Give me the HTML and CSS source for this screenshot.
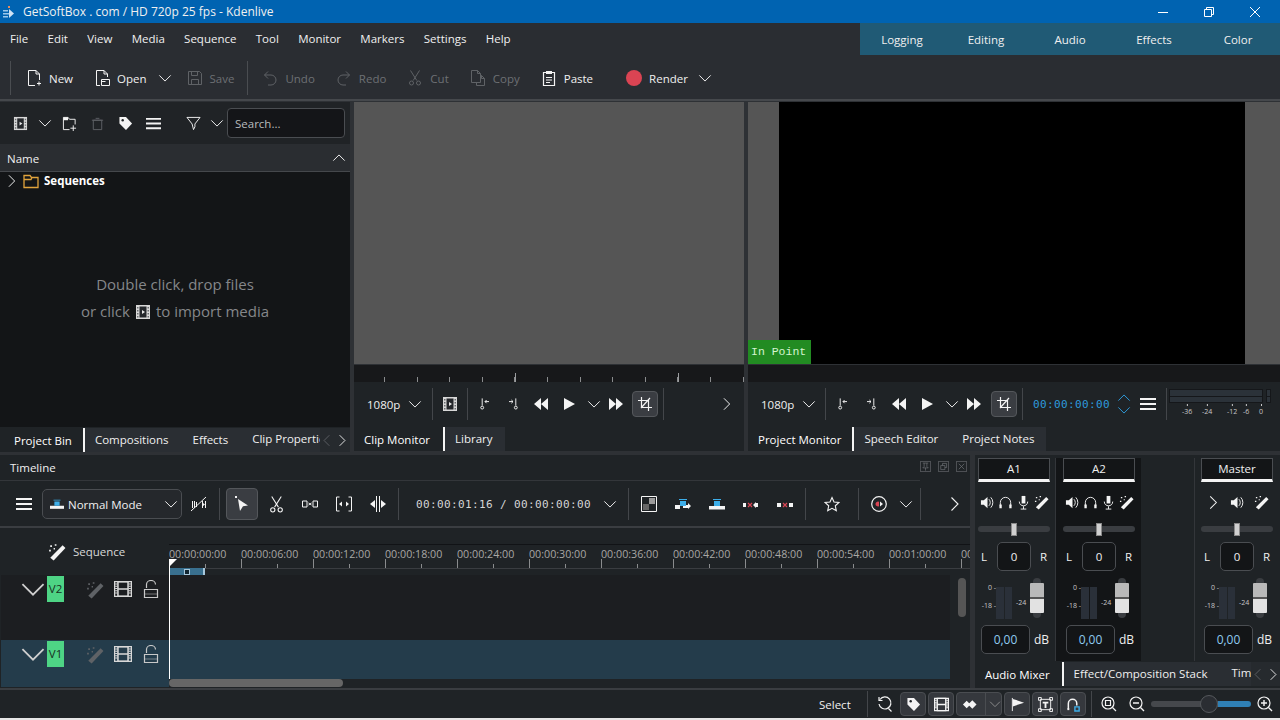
FILE: index.html
```html
<!DOCTYPE html>
<html lang="en">
<head>
    <meta charset="UTF-8">
    <title>GetSoftBox . com / HD 720p 25 fps - Kdenlive</title>
    <link rel="stylesheet" href="styles.css">
</head>
<body>
    <svg class="defs" width="0" height="0">
        <defs>
            <symbol id="i-chev" viewBox="0 0 16 16"><path d="M1.5 5L8 11.5 14.5 5" fill="none" stroke="currentColor" stroke-width="1.1"/></symbol>
            <symbol id="i-right" viewBox="0 0 16 16"><path d="M4.5 1.5L11 8l-6.5 6.5" fill="none" stroke="currentColor" stroke-width="1.1"/></symbol>
            <symbol id="i-left" viewBox="0 0 16 16"><path d="M11.5 1.5L5 8l6.5 6.5" fill="none" stroke="currentColor" stroke-width="1.1"/></symbol>
            <symbol id="i-up" viewBox="0 0 16 16"><path d="M1.5 11L8 4.5 14.5 11" fill="none" stroke="currentColor" stroke-width="1.1"/></symbol>
            <symbol id="i-new" viewBox="0 0 16 16"><path d="M9 15.5H2.5V.5H10L13.5 4v6M10 .5V4h3.5M13 11.5v4M11 13.5h4" fill="none" stroke="currentColor"/></symbol>
            <symbol id="i-open" viewBox="0 0 16 16"><path d="M6 15.5H2.5V.5H10L13.5 4v3M10 .5V4h3.5M7.5 9.5h8v6h-8zM7.5 11.5h4" fill="none" stroke="currentColor"/></symbol>
            <symbol id="i-save" viewBox="0 0 16 16"><path d="M1.5 1.5h11l2 2v11h-13zM4.5 1.5v4h6v-4M4.5 14.5v-5h7v5" fill="none" stroke="currentColor"/></symbol>
            <symbol id="i-undo" viewBox="0 0 16 16"><path d="M6 1.5L2.5 5 6 8.5M2.5 5H9a4.5 4.5 0 0 1 0 10H6" fill="none" stroke="currentColor"/></symbol>
            <symbol id="i-redo" viewBox="0 0 16 16"><path d="M10 1.5L13.5 5 10 8.5M13.5 5H7a4.5 4.5 0 0 0 0 10h3" fill="none" stroke="currentColor"/></symbol>
            <symbol id="i-cut" viewBox="0 0 16 16"><path d="M3.5 .5l6.3 10M12.5 .5L6.2 10.5" fill="none" stroke="currentColor"/><circle cx="4.5" cy="13" r="2" fill="none" stroke="currentColor"/><circle cx="11.5" cy="13" r="2" fill="none" stroke="currentColor"/></symbol>
            <symbol id="i-copy" viewBox="0 0 16 16"><path d="M1.5 12.5V.5h6l3 3v9zM7.5 .5v3h3M10.5 5.5h1l3 3v7h-8v-3M11.5 5.5v3h3" fill="none" stroke="currentColor"/></symbol>
            <symbol id="i-paste" viewBox="0 0 16 16"><path d="M2.5 2.5h11v13h-11z" fill="none" stroke="currentColor" stroke-width="1.2"/><path d="M5 1h6v3H5zM5 7h6v1H5zM5 9.5h6v1H5zM5 12h4v1H5z" fill="currentColor"/></symbol>
            <symbol id="i-clip" viewBox="0 0 16 16"><path d="M1 1h14v14H1z" fill="#d8d8d8"/><path d="M4.5 2.500h7v11h-7z" fill="#24272b"/><path d="M7 6l3 2-3 2z" fill="#e8e8e8"/><path d="M2 3h1.500v1.500H2zM2 6h1.500v1.500H2zM2 9h1.500v1.500H2zM2 12h1.500v1.500H2zM12.500 3H14v1.500h-1.500zM12.500 6H14v1.500h-1.500zM12.500 9H14v1.500h-1.500zM12.500 12H14v1.500h-1.500z" fill="#6a6d70"/></symbol>
            <symbol id="i-addfolder" viewBox="0 0 16 16"><path d="M8 14.5H1.5v-13h5l1.5 2h6V9" fill="none" stroke="currentColor"/><path d="M1.5 1.5h5v3h-5z" fill="currentColor"/><path d="M12 10v6M9 13h6" stroke="currentColor" fill="none"/></symbol>
            <symbol id="i-trash" viewBox="0 0 16 16"><path d="M3.5 4.5h9v10h-9zM2 4.5h12M6 2.5h4" fill="none" stroke="currentColor"/></symbol>
            <symbol id="i-tag" viewBox="0 0 16 16"><path d="M1.5 1h7l6.500 7-6.500 7L1.500 8z" fill="currentColor"/><circle cx="5" cy="4.5" r="1.3" fill="#1f2326"/></symbol>
            <symbol id="i-menu" viewBox="0 0 16 16"><path d="M0 2h16v2H0zM0 7h16v2H0zM0 12h16v2H0z" fill="currentColor"/></symbol>
            <symbol id="i-filter" viewBox="0 0 16 16"><path d="M1 1.5h14L9.5 8.5v3L8 14.5 6.5 8.500z" fill="none" stroke="currentColor"/></symbol>
            <symbol id="i-in" viewBox="-2 -2 20 20"><path d="M4.5 1v9" stroke="currentColor" fill="none" stroke-width="1.2"/><circle cx="4.5" cy="12.5" r="1.8" fill="none" stroke="currentColor" stroke-width="1.2"/><path d="M13 5H8M10 3L8 5l2 2" fill="none" stroke="currentColor" stroke-width="1.2"/></symbol>
            <symbol id="i-out" viewBox="-2 -2 20 20"><path d="M11.5 1v9" stroke="currentColor" fill="none" stroke-width="1.2"/><circle cx="11.5" cy="12.5" r="1.8" fill="none" stroke="currentColor" stroke-width="1.2"/><path d="M3 5h5M6 3l2 2-2 2" fill="none" stroke="currentColor" stroke-width="1.2"/></symbol>
            <symbol id="i-rew" viewBox="0 0 16 16"><path d="M8 2v12L1 8zM15 2v12L8 8z" fill="currentColor"/></symbol>
            <symbol id="i-play" viewBox="0 0 16 16"><path d="M3 2v12l11-6z" fill="currentColor"/></symbol>
            <symbol id="i-fwd" viewBox="0 0 16 16"><path d="M1 2v12l7-6zM8 2v12l7-6z" fill="currentColor"/></symbol>
            <symbol id="i-crop" viewBox="0 0 16 16"><path d="M4.5 1v10.5H15M1 4.5h10.5V15M4 12L13 2" fill="none" stroke="currentColor" stroke-width="1.2"/></symbol>
            <symbol id="i-nospacer" viewBox="0 0 16 16"><path d="M0 15L15 1" fill="none" stroke="currentColor"/><path d="M1 5h1v7H1zM3 5h1v7H3zM5 6h1v5H5zM11 5h1v7h-1zM14 5h1v7h-1zM12 7l2 1.5-2 1.5z" fill="currentColor"/></symbol>
            <symbol id="i-pointer" viewBox="0 0 16 16"><path d="M4 3l10 6.5-5 .8L6 15z" fill="currentColor"/><path d="M1 0h2v2H1z" fill="currentColor"/></symbol>
            <symbol id="i-spacer" viewBox="0 0 16 16"><path d="M.5 5H5v6H.5zM11 5h4.5v6H11z" fill="none" stroke="currentColor"/><path d="M6.5 7l3 2M9.5 7l-3 2" stroke="currentColor" fill="none"/></symbol>
            <symbol id="i-ripple" viewBox="0 0 16 16"><path d="M3.5 1H.5v14h3M12.5 1h3v14h-3" fill="none" stroke="currentColor"/><path d="M3 8l3-2.5v5zM13 8l-3-2.5v5z" fill="currentColor"/></symbol>
            <symbol id="i-roll" viewBox="0 0 16 16"><path d="M6.5 0v16M9.5 0v16" fill="none" stroke="currentColor"/><path d="M0 8l5-4v8zM16 8l-5-4v8z" fill="currentColor"/></symbol>
            <symbol id="i-checker" viewBox="0 0 16 16"><path d="M.5 .5h15v15H.5z" fill="none" stroke="currentColor"/><path d="M8 2h6v6H8z" fill="#9a9a9a"/><path d="M2 8h6v6H2z" fill="#666"/></symbol>
            <symbol id="i-insert" viewBox="0 0 16 16"><path d="M0 9h5v4H0zM8 9h5V7l3 3-3 3v-1H8z" fill="currentColor"/><path d="M5 5h6v5H5zM4 3h8v1H4z" fill="#3daee9"/></symbol>
            <symbol id="i-overwrite" viewBox="0 0 16 16"><path d="M0 10h16v3.5H0z" fill="currentColor"/><path d="M5 5h6v5H5zM4 3h8v1H4z" fill="#3daee9"/></symbol>
            <symbol id="i-extract" viewBox="0 0 16 16"><path d="M0 7h3v4H0zM10 9l3-3v1h2v4h-2v1z" fill="currentColor"/><path d="M5 7l4 4M9 7l-4 4" stroke="#da4453" fill="none" stroke-width="1.2"/></symbol>
            <symbol id="i-lift" viewBox="0 0 16 16"><path d="M0 7h4v4H0zM12 7h4v4h-4z" fill="currentColor"/><path d="M6 7l4 4M10 7l-4 4" stroke="#da4453" fill="none" stroke-width="1.2"/></symbol>
            <symbol id="i-star" viewBox="0 0 16 16"><path d="M8 1.5l2 4.5 5 .5-3.700 3.300 1 4.900L8 12.300 3.700 14.700l1-4.900L1 6.500 6 6z" fill="none" stroke="currentColor" stroke-width="1.1"/></symbol>
            <symbol id="i-rec" viewBox="0 0 16 16"><circle cx="8" cy="8" r="7.3" fill="none" stroke="currentColor" stroke-width="1.2"/><path d="M4.5 8A2.5 2.5 0 0 1 8 5.7v4.6A2.500 2.500 0 0 1 4.500 8z" fill="#da4453"/><path d="M9 5.5L12 8l-3 2.5z" fill="currentColor"/></symbol>
            <symbol id="i-wand" viewBox="0 0 16 16"><path d="M13 2l2.500 2.500L5 15.500 2 13z" fill="currentColor"/><path d="M2 2h1.500v1.500H2zM6 1h1.500v1.500H6zM1 6h1.500v1.500H1zM5 4.500h1.200v1.200H5z" fill="currentColor"/></symbol>
            <symbol id="i-film" viewBox="0 0 16 16"><path d="M.5 1.5h15v13H.5z" fill="none" stroke="currentColor" stroke-width="1.2"/><path d="M3.5 1.5h9v13h-9zM3.5 8h9" fill="none" stroke="currentColor" stroke-width="1.4"/><path d="M1 3h2v1H1zM1 5h2v1H1zM1 7h2v1H1zM1 9h2v1H1zM1 11h2v1H1zM13 3h2v1h-2zM13 5h2v1h-2zM13 7h2v1h-2zM13 9h2v1h-2zM13 11h2v1h-2z" fill="currentColor"/></symbol>
            <symbol id="i-lock" viewBox="0 0 16 18"><path d="M1.5 9.500h13v8h-13z" fill="none" stroke="currentColor" stroke-width="1.2"/><path d="M3.5 8V4.500a4.500 4 0 0 1 9 0" fill="none" stroke="currentColor" stroke-width="1.2"/><path d="M2 14h12" stroke="currentColor" opacity=".5"/></symbol>
            <symbol id="i-speaker" viewBox="0 0 16 16"><path d="M1 5.5h3L8 2v12l-4-3.500H1z" fill="currentColor"/><path d="M9.5 4.500a5 5 0 0 1 0 7M11.500 2.500a8 8 0 0 1 0 11" fill="none" stroke="currentColor"/></symbol>
            <symbol id="i-head" viewBox="0 0 16 16"><path d="M2.500 12V8a5.500 5.500 0 0 1 11 0v4" fill="none" stroke="currentColor"/><path d="M1.500 10H4v4H1.500zM12 10h2.500v4H12z" fill="currentColor"/></symbol>
            <symbol id="i-mic" viewBox="0 0 16 16"><path d="M6 1h4v8H6z" fill="currentColor"/><path d="M3.500 7c0 6 9 6 9 0M8 12v3M5 15h6" fill="none" stroke="currentColor"/></symbol>
            <symbol id="i-pin" viewBox="0 0 16 16"><path d="M.5 .5h15v15H.5z" fill="none" stroke="currentColor"/><path d="M4 3h8M6 3v5L4 10h8l-2-2V3M8 10v4" fill="none" stroke="currentColor"/></symbol>
            <symbol id="i-float" viewBox="0 0 16 16"><path d="M.5 .5h15v15H.5zM4 6.500h6v6H4zM6.500 6.500v-3h6v6H10" fill="none" stroke="currentColor"/></symbol>
            <symbol id="i-close" viewBox="0 0 16 16"><path d="M.5 .5h15v15H.5zM4 4l8 8M12 4l-8 8" fill="none" stroke="currentColor"/></symbol>
            <symbol id="i-loop" viewBox="0 0 16 16"><path d="M3 3.500A6 6 0 1 1 2 8M11.500 12.500l3 3M2 1v3.500h3.500" fill="none" stroke="currentColor" stroke-width="1.2"/></symbol>
            <symbol id="i-keys" viewBox="0 0 16 16"><path d="M5 4l4 4-4 4-4-4zM11 3.500L15.500 8 11 12.500 6.500 8z" fill="currentColor"/></symbol>
            <symbol id="i-flag" viewBox="0 0 16 16"><path d="M2.500 1v14" stroke="currentColor" fill="none"/><path d="M3 2l12 4-12 4z" fill="currentColor"/></symbol>
            <symbol id="i-text" viewBox="0 0 16 16"><path d="M2.500 2.500h11v11h-11z" fill="none" stroke="currentColor"/><path d="M.5 .5h3v3h-3zM12.500 .5h3v3h-3zM.5 12.500h3v3h-3zM12.500 12.500h3v3h-3z" fill="none" stroke="currentColor"/><path d="M5 5h6v1.800H9v5H7v-5H5z" fill="currentColor"/></symbol>
            <symbol id="i-magnet" viewBox="0 0 16 16"><path d="M2.500 13V7a4.500 4.500 0 0 1 9 0v2" fill="none" stroke="currentColor" stroke-width="1.6"/><path d="M1.500 12h2v2h-2z" fill="currentColor"/><path d="M9.500 10.500h4.500v4.500H9.500z" fill="none" stroke="#3daee9" stroke-width="1.5"/></symbol>
            <symbol id="i-zfit" viewBox="0 0 16 16"><circle cx="7" cy="7" r="6" fill="none" stroke="currentColor" stroke-width="1.2"/><path d="M4.500 4.500h5v5h-5zM11.500 11.500l3.500 3.500" fill="none" stroke="currentColor" stroke-width="1.2"/></symbol>
            <symbol id="i-zout" viewBox="0 0 16 16"><circle cx="7" cy="7" r="6" fill="none" stroke="currentColor" stroke-width="1.2"/><path d="M4 7h6M11.500 11.500l3.500 3.500" fill="none" stroke="currentColor" stroke-width="1.4"/></symbol>
            <symbol id="i-zin" viewBox="0 0 16 16"><circle cx="7" cy="7" r="6" fill="none" stroke="currentColor" stroke-width="1.2"/><path d="M4 7h6M7 4v6M11.500 11.500l3.500 3.500" fill="none" stroke="currentColor" stroke-width="1.4"/></symbol>
            <symbol id="i-kde" viewBox="0 0 12 14"><path d="M0 5h5v1.500H0zM0 8h6v1.500H0zM0 11h5v1.500H0z" fill="#9cc7ea"/><path d="M6 4l5 4.500L6 13z" fill="#cfe3f5"/><path d="M5 1h2v2H5z" fill="#e68a5c"/></symbol>
        </defs>
    </svg>

    <header class="titlebar">
        <svg class="ico"><use href="#i-kde"/></svg>
        <span class="title-text">GetSoftBox . com / HD 720p 25 fps - Kdenlive</span>
        <div class="win-btns">
            <svg viewBox="0 0 12 12"><path d="M1 6.500h10" stroke="#fff" fill="none"/></svg>
            <svg viewBox="0 0 12 12"><path d="M1.500 3.500h7v7h-7zM3.500 3.500v-2h7v7h-2" stroke="#fff" fill="none"/></svg>
            <svg viewBox="0 0 12 12"><path d="M1 1l10 10M11 1L1 11" stroke="#fff" fill="none"/></svg>
        </div>
    </header>

    <div class="menubar">
        <nav class="menu">
            <span>File</span><span>Edit</span><span>View</span><span>Media</span><span>Sequence</span><span>Tool</span><span>Monitor</span><span>Markers</span><span>Settings</span><span>Help</span>
        </nav>
        <div class="activities">
            <span>Logging</span><span>Editing</span><span>Audio</span><span>Effects</span><span>Color</span>
        </div>
    </div>

    <div class="toolbar">
        <span class="sep sep-first"></span>
        <span class="tool"><svg class="ico"><use href="#i-new"/></svg>New</span>
        <span class="tool"><svg class="ico"><use href="#i-open"/></svg>Open</span>
        <svg class="ico small chev-open"><use href="#i-chev"/></svg>
        <span class="tool off"><svg class="ico"><use href="#i-save"/></svg>Save</span>
        <span class="sep sep-edit"></span>
        <span class="tool off"><svg class="ico"><use href="#i-undo"/></svg>Undo</span>
        <span class="tool off"><svg class="ico"><use href="#i-redo"/></svg>Redo</span>
        <span class="tool off"><svg class="ico"><use href="#i-cut"/></svg>Cut</span>
        <span class="tool off"><svg class="ico"><use href="#i-copy"/></svg>Copy</span>
        <span class="tool"><svg class="ico"><use href="#i-paste"/></svg>Paste</span>
        <span class="tool render"><span class="rec-dot"></span>Render</span>
        <svg class="ico small"><use href="#i-chev"/></svg>
    </div>

    <main class="upper">
        <section class="bin">
            <div class="bin-tools">
                <svg class="ico"><use href="#i-clip"/></svg>
                <svg class="ico small"><use href="#i-chev"/></svg>
                <svg class="ico"><use href="#i-addfolder"/></svg>
                <svg class="ico off"><use href="#i-trash"/></svg>
                <svg class="ico"><use href="#i-tag"/></svg>
                <svg class="ico"><use href="#i-menu"/></svg>
                <svg class="ico filter"><use href="#i-filter"/></svg>
                <svg class="ico small"><use href="#i-chev"/></svg>
                <div class="search">Search...</div>
            </div>
            <div class="bin-head"><span>Name</span><svg class="ico small"><use href="#i-up"/></svg></div>
            <div class="bin-body">
                <div class="tree-row">
                    <svg class="ico small"><use href="#i-right"/></svg>
                    <svg class="folder" viewBox="0 0 16 16"><path d="M1 2.500h6l1.500 2H15v10H1zM1 6.500h7l1-2" fill="none" stroke="#e0a33c" stroke-width="1.3"/></svg>
                    <b>Sequences</b>
                </div>
                <div class="bin-hint">
                    <div>Double click, drop files</div>
                    <div class="hint-line">or click <svg class="ico"><use href="#i-clip"/></svg> to import media</div>
                </div>
            </div>
            <div class="tabs">
                <span class="tab active">Project Bin</span><span class="tab">Compositions</span><span class="tab">Effects</span><span class="tab tab-cut">Clip Properties</span>
                <span class="tab-arrows"><svg class="ico small off"><use href="#i-left"/></svg><svg class="ico small"><use href="#i-right"/></svg></span>
            </div>
        </section>

        <section class="monitor clip-mon">
            <div class="screen gray"></div>
            <div class="mon-ruler ticked"></div>
            <div class="mon-ctrl">
                <span class="res">1080p</span>
                <svg class="ico small"><use href="#i-chev"/></svg>
                <span class="vsep"></span>
                <span class="ib"><svg class="ico"><use href="#i-clip"/></svg></span>
                <span class="vsep"></span>
                <span class="ib"><svg class="ico"><use href="#i-in"/></svg></span>
                <span class="ib"><svg class="ico"><use href="#i-out"/></svg></span>
                <span class="ib"><svg class="ico"><use href="#i-rew"/></svg></span>
                <span class="ib"><svg class="ico"><use href="#i-play"/></svg></span>
                <span class="ib thin"><svg class="ico small"><use href="#i-chev"/></svg></span>
                <span class="ib thin"><svg class="ico"><use href="#i-fwd"/></svg></span>
                <span class="ib on"><svg class="ico"><use href="#i-crop"/></svg></span>
                <span class="vsep"></span>
                <svg class="ico small mon-more"><use href="#i-right"/></svg>
            </div>
            <div class="tabs">
                <span class="tab active">Clip Monitor</span><span class="tab">Library</span>
            </div>
        </section>

        <section class="monitor proj-mon">
            <div class="screen gray">
                <div class="video"></div>
                <div class="in-point">In Point</div>
            </div>
            <div class="mon-ruler"></div>
            <div class="mon-ctrl">
                <span class="res">1080p</span>
                <svg class="ico small"><use href="#i-chev"/></svg>
                <span class="vsep"></span>
                <span class="ib"><svg class="ico"><use href="#i-in"/></svg></span>
                <span class="ib"><svg class="ico"><use href="#i-out"/></svg></span>
                <span class="ib"><svg class="ico"><use href="#i-rew"/></svg></span>
                <span class="ib"><svg class="ico"><use href="#i-play"/></svg></span>
                <span class="ib thin"><svg class="ico small"><use href="#i-chev"/></svg></span>
                <span class="ib thin"><svg class="ico"><use href="#i-fwd"/></svg></span>
                <span class="ib on"><svg class="ico"><use href="#i-crop"/></svg></span>
                <span class="vsep"></span>
                <span class="timecode blue">00:00:00:00</span>
                <span class="spin"><svg class="ico small"><use href="#i-up"/></svg><svg class="ico small"><use href="#i-chev"/></svg></span>
                <svg class="ico mon-menu"><use href="#i-menu"/></svg>
                <span class="vsep"></span>
                <div class="vu">
                    <div class="vu-bars">
                        <div class="vu-main"><i></i><i></i></div>
                        <div class="vu-clip"><i></i><i></i></div>
                    </div>
                    <div class="vu-scale"><span class="s36">-36</span><span class="s24">-24</span><span class="s12">-12</span><span class="s6">-6</span><span class="s0">0</span></div>
                </div>
            </div>
            <div class="tabs">
                <span class="tab active">Project Monitor</span><span class="tab">Speech Editor</span><span class="tab">Project Notes</span>
            </div>
        </section>
    </main>

    <div class="lower">
        <section class="timeline">
            <div class="tl-title">
                <span>Timeline</span>
                <div class="dock-btns">
                    <svg class="ico"><use href="#i-pin"/></svg><svg class="ico"><use href="#i-float"/></svg><svg class="ico"><use href="#i-close"/></svg>
                </div>
            </div>
            <div class="tl-tools">
                <span class="ib slot"><svg class="ico"><use href="#i-menu"/></svg></span>
                <div class="mode">
                    <svg class="ico"><use href="#i-overwrite"/></svg>
                    <span>Normal Mode</span>
                    <svg class="ico small"><use href="#i-chev"/></svg>
                </div>
                <span class="ib slot"><svg class="ico"><use href="#i-nospacer"/></svg></span>
                <span class="vsep"></span>
                <span class="ib on pointer"><svg class="ico"><use href="#i-pointer"/></svg></span>
                <span class="ib slot"><svg class="ico cut-ico"><use href="#i-cut"/></svg></span>
                <span class="ib slot"><svg class="ico"><use href="#i-spacer"/></svg></span>
                <span class="ib slot"><svg class="ico"><use href="#i-ripple"/></svg></span>
                <span class="ib slot"><svg class="ico"><use href="#i-roll"/></svg></span>
                <span class="vsep"></span>
                <span class="timecode tl-code">00:00:01:16 / 00:00:00:00</span>
                <svg class="ico small chev-code"><use href="#i-chev"/></svg>
                <span class="vsep"></span>
                <span class="ib slot"><svg class="ico"><use href="#i-checker"/></svg></span>
                <span class="ib slot"><svg class="ico"><use href="#i-insert"/></svg></span>
                <span class="ib slot"><svg class="ico"><use href="#i-overwrite"/></svg></span>
                <span class="ib slot"><svg class="ico"><use href="#i-extract"/></svg></span>
                <span class="ib slot"><svg class="ico"><use href="#i-lift"/></svg></span>
                <span class="vsep"></span>
                <span class="ib slot wide"><svg class="ico"><use href="#i-star"/></svg></span>
                <span class="vsep"></span>
                <span class="ib slot"><svg class="ico"><use href="#i-rec"/></svg></span>
                <svg class="ico small chev-rec"><use href="#i-chev"/></svg>
                <span class="vsep"></span>
                <svg class="ico tl-more"><use href="#i-right"/></svg>
            </div>
            <div class="tl-rulerrow">
                <div class="seq-cell"><svg class="ico"><use href="#i-wand"/></svg><span>Sequence</span></div>
                <div class="ruler">
                    <div class="labels">
                        <span>00:00:00:00</span><span>00:00:06:00</span><span>00:00:12:00</span><span>00:00:18:00</span><span>00:00:24:00</span><span>00:00:30:00</span><span>00:00:36:00</span><span>00:00:42:00</span><span>00:00:48:00</span><span>00:00:54:00</span><span>00:01:00:00</span><span>00:01:06:00</span>
                    </div>
                    <div class="zone"><i></i></div>
                </div>
            </div>
            <div class="tracks">
                <div class="track v2">
                    <div class="track-head">
                        <svg class="ico tr-chev"><use href="#i-chev"/></svg>
                        <span class="tr-name">V2</span>
                        <svg class="ico off tr-wand"><use href="#i-wand"/></svg>
                        <svg class="ico tr-film"><use href="#i-film"/></svg>
                        <svg class="ico tr-lock"><use href="#i-lock"/></svg>
                    </div>
                    <div class="track-body"></div>
                </div>
                <div class="track v1">
                    <div class="track-head">
                        <svg class="ico tr-chev"><use href="#i-chev"/></svg>
                        <span class="tr-name">V1</span>
                        <svg class="ico off tr-wand"><use href="#i-wand"/></svg>
                        <svg class="ico tr-film"><use href="#i-film"/></svg>
                        <svg class="ico tr-lock"><use href="#i-lock"/></svg>
                    </div>
                    <div class="track-col">
                        <div class="track-body"></div>
                        <div class="hscroll"><i></i></div>
                    </div>
                </div>
                <div class="vscroll"></div>
                <div class="playhead"></div>
            </div>
        </section>

        <section class="mixer">
            <div class="channels">
                <div class="channel">
                    <div class="ch-name">A1</div>
                    <div class="ch-icons"><svg class="ico"><use href="#i-speaker"/></svg><svg class="ico"><use href="#i-head"/></svg><svg class="ico"><use href="#i-mic"/></svg><svg class="ico"><use href="#i-wand"/></svg></div>
                    <div class="balance"><i></i></div>
                    <div class="pan"><span>L</span><b>0</b><span>R</span></div>
                    <div class="levels">
                        <div class="db-labels"><span>0 -</span><span>-18 -</span></div>
                        <div class="bars"><i></i><i></i></div>
                        <span class="db24">-24</span>
                        <div class="fader"><i></i></div>
                    </div>
                    <div class="gain"><b>0,00</b><span>dB</span></div>
                </div>
                <div class="channel dark">
                    <div class="ch-name">A2</div>
                    <div class="ch-icons"><svg class="ico"><use href="#i-speaker"/></svg><svg class="ico"><use href="#i-head"/></svg><svg class="ico"><use href="#i-mic"/></svg><svg class="ico"><use href="#i-wand"/></svg></div>
                    <div class="balance"><i></i></div>
                    <div class="pan"><span>L</span><b>0</b><span>R</span></div>
                    <div class="levels">
                        <div class="db-labels"><span>0 -</span><span>-18 -</span></div>
                        <div class="bars"><i></i><i></i></div>
                        <span class="db24">-24</span>
                        <div class="fader"><i></i></div>
                    </div>
                    <div class="gain"><b>0,00</b><span>dB</span></div>
                </div>
                <div class="channel master">
                    <div class="ch-name">Master</div>
                    <div class="ch-icons"><svg class="ico"><use href="#i-right"/></svg><svg class="ico"><use href="#i-speaker"/></svg><svg class="ico"><use href="#i-wand"/></svg></div>
                    <div class="balance"><i></i></div>
                    <div class="pan"><span>L</span><b>0</b><span>R</span></div>
                    <div class="levels">
                        <div class="db-labels"><span>0 -</span><span>-18 -</span></div>
                        <div class="bars"><i></i><i></i></div>
                        <span class="db24">-24</span>
                        <div class="fader"><i></i></div>
                    </div>
                    <div class="gain"><b>0,00</b><span>dB</span></div>
                </div>
            </div>
            <div class="tabs">
                <span class="tab active">Audio Mixer</span><span class="tab">Effect/Composition Stack</span><span class="tab tab-cut2">Time Remapping</span>
                <span class="tab-arrows"><svg class="ico small off"><use href="#i-left"/></svg><svg class="ico small"><use href="#i-right"/></svg></span>
            </div>
        </section>
    </div>

    <footer class="statusbar">
        <span class="st-select">Select</span>
        <span class="vsep"></span>
        <svg class="ico st-loop"><use href="#i-loop"/></svg>
        <span class="st-btn"><svg class="ico"><use href="#i-tag"/></svg></span>
        <span class="st-btn"><svg class="ico"><use href="#i-film"/></svg></span>
        <span class="st-btn st-combo"><svg class="ico"><use href="#i-keys"/></svg><i></i><svg class="ico small"><use href="#i-chev"/></svg></span>
        <span class="st-btn"><svg class="ico"><use href="#i-flag"/></svg></span>
        <span class="st-btn"><svg class="ico"><use href="#i-text"/></svg></span>
        <span class="st-btn"><svg class="ico"><use href="#i-magnet"/></svg></span>
        <span class="vsep st-sep2"></span>
        <svg class="ico st-zf"><use href="#i-zfit"/></svg>
        <svg class="ico st-zo"><use href="#i-zout"/></svg>
        <div class="zoom-slider"><i></i></div>
        <svg class="ico st-zi"><use href="#i-zin"/></svg>
    </footer>
    <div class="bottom-edge"></div>
</body>
</html>
```

FILE: styles.css
```css
* {
    box-sizing: border-box;
}
body {
    margin: 0;
    width: 1280px;
    height: 720px;
    overflow: hidden;
    background: #2e3135;
    color: #f0f0f0;
    font-family: "Open Sans", "Noto Sans", sans-serif;
    font-size: 11.5px;
}
.defs {
    position: absolute;
}
.ico {
    width: 16px;
    height: 16px;
    flex: none;
    display: block;
    color: #f4f4f4;
}
.ico.small {
    width: 14px;
    height: 14px;
}
.ico.off {
    color: #5f6266;
}

/* title bar */
.titlebar {
    height: 23px;
    background: #0063b1;
    display: flex;
    align-items: center;
    padding-left: 3px;
    font-size: 12px;
}
.titlebar .ico {
    width: 12px;
    height: 14px;
}
.title-text {
    margin-left: 8px;
}
.win-btns {
    margin-left: auto;
    display: flex;
    gap: 34px;
    padding-right: 19px;
}
.win-btns svg {
    width: 12px;
    height: 12px;
    display: block;
}

/* menu */
.menubar {
    height: 32px;
    background: #2a2d32;
    display: flex;
    justify-content: space-between;
}
.menu {
    display: flex;
    gap: 19.3px;
    padding: 0 0 2px 10px;
    align-items: center;
}
.activities {
    width: 420px;
    background: #205a75;
    display: grid;
    grid-template-columns: repeat(5, 84px);
    align-items: center;
    text-align: center;
}

/* main toolbar */
.toolbar {
    height: 46px;
    background: #2a2d32;
    border-bottom: 2px solid #45484c;
    display: flex;
    align-items: center;
    padding: 2px 0 0 10px;
}
.sep {
    width: 1px;
    height: 34px;
    background: #4a4d51;
}
.sep-first {
    margin-right: 15px;
}
.sep-edit {
    margin: 0 14px 0 -8px;
}
.tool {
    display: flex;
    align-items: center;
    gap: 7px;
    margin-right: 21px;
}
.tool.off {
    color: #6d7074;
}
.tool.off .ico {
    color: #5f6266;
}
.chev-open {
    margin: 0 15px 0 -10px;
}
.render {
    margin: 0 10px 0 12px;
}
.rec-dot {
    width: 16px;
    height: 16px;
    border-radius: 50%;
    background: #da4453;
}

/* upper panels */
.upper {
    height: 351px;
    display: flex;
    gap: 4px;
    padding-top: 1px;
}
.bin {
    width: 350px;
    display: flex;
    flex-direction: column;
}
.bin-tools {
    height: 42px;
    background: #202326;
    display: flex;
    align-items: center;
    padding-left: 13px;
}
.bin-tools .ico {
    width: 15px;
    height: 15px;
    margin-right: 13px;
}
.bin-tools .ico.small {
    width: 14px;
    height: 14px;
    margin: 0 9.5px 0 -3px;
}
.bin-tools .filter {
    margin-left: 12px;
    margin-right: 12.5px;
}
.search {
    width: 118px;
    height: 30px;
    margin-left: -6.5px;
    background: #141518;
    border: 1px solid #4a4d51;
    border-radius: 4px;
    color: #b9bbbd;
    padding: 6px 7px;
    line-height: 18px;
}
.bin-head {
    height: 28px;
    background: #2a2d31;
    border-bottom: 1px solid #45484c;
    display: flex;
    align-items: center;
    justify-content: space-between;
    padding: 1px 4px 0 7px;
}
.bin-body {
    flex: 1;
    background: #131517;
    display: flex;
    flex-direction: column;
}
.tree-row {
    display: flex;
    align-items: center;
    height: 17px;
    padding-left: 5px;
}
.tree-row b {
    margin-left: 5px;
    color: #fff;
}
.folder {
    width: 16px;
    height: 16px;
    margin-left: 4px;
}
.bin-hint {
    margin-top: 82px;
    text-align: center;
    color: #85878a;
    font-size: 15px;
    line-height: 27px;
}
.hint-line {
    display: flex;
    justify-content: center;
    align-items: center;
    gap: 5px;
}

/* tabs */
.tabs {
    height: 25px;
    flex: none;
    display: flex;
    align-items: stretch;
    padding-top: 1px;
    background: #1f2326;
    overflow: hidden;
}
.tab {
    display: flex;
    align-items: center;
    padding: 0 12px 2px;
    background: #2a2e33;
    white-space: nowrap;
}
.tab.active {
    background: #1f2326;
    border-right: 2px solid #f4f4f4;
    padding: 0 11px 0 10px;
    color: #fff;
}
.tab.active + .tab {
    padding-left: 10px;
}
.bin .tabs {
    padding-left: 4px;
}
.clip-mon .tab.active {
    padding-right: 13px;
}
.mixer .tab.active {
    padding-right: 12px;
}
.tab-cut, .tab-cut2 {
    overflow: hidden;
    padding-right: 0;
    display: block;
    line-height: 21px;
}
.tab-cut {
    width: 80px;
}
.tab-cut2 {
    width: 38px;
}
.tab-arrows {
    display: flex;
    align-items: center;
    gap: 3px;
    background: #262a2e;
    flex: 1;
}
.tab-arrows .ico.small {
    width: 13px;
    height: 13px;
}

/* monitors */
.monitor {
    display: flex;
    flex-direction: column;
}
.clip-mon {
    width: 390px;
}
.proj-mon {
    width: 532px;
}
.screen {
    height: 262px;
    display: flex;
    position: relative;
    justify-content: center;
}
.gray {
    background: #555;
}
.video {
    width: 466px;
    margin-left: -4px;
    background: #000;
}
.in-point {
    position: absolute;
    left: 0;
    bottom: 0;
    width: 63px;
    height: 24px;
    background: #228b22;
    color: #d4f4d0;
    font: 11.5px/24px "Liberation Mono", monospace;
    padding-left: 3px;
}
.mon-ruler {
    height: 17px;
    background-color: #17181a;
    margin-top: 1px;
}
.ticked {
    background-image:
        repeating-linear-gradient(to right, #9a9c9e 0 1px, transparent 1px 163px),
        repeating-linear-gradient(to right, #8a8c8e 0 1px, transparent 1px 32.6px);
    background-size: 100% 9px, 100% 5px;
    background-position: 161px bottom, 30px bottom;
    background-repeat: no-repeat;
}
.mon-ctrl {
    height: 44px;
    background: #1f2326;
    display: flex;
    align-items: center;
    padding-left: 13px;
}
.res {
    width: 41px;
}
.mon-ctrl > .ico.small {
    margin-right: 7px;
}
.proj-mon .mon-ctrl > .ico.small {
    margin-right: 6px;
}
.vsep {
    width: 1px;
    height: 32px;
    margin: 0 3px;
    background: #43464a;
    flex: none;
}
.ib {
    width: 28px;
    height: 26px;
    flex: none;
    display: flex;
    align-items: center;
    justify-content: center;
}
.ib.thin {
    width: 22px;
}
.ib.on {
    width: 26px;
    background: #3a3d42;
    border: 1px solid #54575b;
    border-radius: 4px;
    margin: 0 2px 0 5px;
}
.proj-mon .ib.on {
    margin-left: 6px;
}
.mon-ctrl > .mon-more {
    margin-left: 53px;
}
.timecode {
    font-family: "DejaVu Sans Mono", monospace;
    font-size: 11px;
    letter-spacing: .38px;
    white-space: nowrap;
}
.blue {
    color: #2e9bdc;
    margin-left: 7px;
}
.spin {
    display: flex;
    flex-direction: column;
    margin-left: 7px;
}
.spin .ico.small {
    color: #2e9bdc;
    margin: -1px 0;
}
.mon-menu {
    margin: 0 7px 0 9px;
}
.vu {
    align-self: flex-start;
    margin: 7px 0 0 -1px;
    width: 102px;
}
.vu-bars {
    display: flex;
    gap: 3px;
}
.vu-main, .vu-clip {
    background: #15171a;
    padding: 1px;
    display: flex;
    flex-direction: column;
    gap: 1px;
    height: 14px;
}
.vu-main {
    width: 94px;
}
.vu-clip {
    width: 5px;
}
.vu-main i, .vu-clip i {
    flex: 1;
    background: #2b3239;
}
.vu-scale {
    height: 12px;
    position: relative;
    font-size: 7px;
    color: #c8c8c8;
    margin-top: 1px;
    padding-top: 3px;
}
.vu-scale span {
    position: absolute;
    top: 3px;
    transform: translateX(-50%);
}
.vu-scale span::before {
    content: "";
    position: absolute;
    left: 50%;
    top: -3px;
    width: 1px;
    height: 2px;
    background: #c8c8c8;
}
.s36 { left: 18px; }
.s24 { left: 38px; }
.s12 { left: 63px; }
.s6 { left: 77px; }
.s0 { left: 92px; }

/* lower area */
.lower {
    height: 236px;
    display: flex;
    gap: 5px;
    padding-top: 3px;
}
.timeline {
    width: 970px;
    flex: none;
    background: #1f2326;
    display: flex;
    flex-direction: column;
    position: relative;
}
.tl-title {
    height: 26px;
    display: flex;
    align-items: center;
    padding-left: 10px;
    border-bottom: 1px solid #33363a;
    margin-right: 50px;
    position: relative;
}
.dock-btns {
    position: absolute;
    right: -47px;
    top: 6px;
    display: flex;
    gap: 7px;
}
.dock-btns .ico {
    width: 11px;
    height: 11px;
    color: #6f7276;
}
.tl-tools {
    height: 47px;
    border-bottom: 2px solid #3a3d41;
    display: flex;
    align-items: center;
    padding: 1px 0 0 7px;
}
.mode {
    width: 140px;
    height: 30px;
    margin-left: 1px;
    border: 1px solid #4a4d51;
    border-radius: 5px;
    background: #25282c;
    display: flex;
    align-items: center;
    padding: 0 3px 0 7px;
    gap: 4px;
    flex: none;
}
.mode .ico:first-child {
    width: 14px;
    height: 14px;
}
.mode span {
    flex: 1;
}
.ib.slot {
    width: 34px;
}
.ib.slot.wide {
    width: 46px;
}
.ib.on.pointer {
    width: 32px;
    height: 32px;
    margin: 0 1px 0 3px;
}
.cut-ico {
    width: 17px;
    height: 17px;
}
.tl-code {
    margin-left: 14px;
    width: 175px;
    color: #d6d6d6;
}
.tl-tools > .chev-code {
    margin: 0 8px 0 12px;
}
.tl-tools > .chev-rec {
    margin: 0 4px 0 3px;
}
.tl-more {
    margin-left: 23px;
}
.tl-rulerrow {
    height: 47px;
    display: flex;
}
.seq-cell {
    width: 169px;
    flex: none;
    display: flex;
    align-items: center;
    gap: 7px;
    padding-left: 48px;
    color: #d8d8d8;
}
.seq-cell .ico {
    width: 18px;
    height: 18px;
}
.ruler {
    flex: 1;
    margin-top: 16px;
    border-top: 1px solid #111316;
    position: relative;
    overflow: hidden;
    background-image:
        repeating-linear-gradient(to right, #8a8c8e 0 1px, transparent 1px 72px),
        repeating-linear-gradient(to right, #8a8c8e 0 1px, transparent 1px 72px);
    background-size: 100% 9px, 100% 4px;
    background-position: 0 14px, 36px 19px;
    background-repeat: no-repeat;
}
.ruler::after {
    content: "";
    position: absolute;
    left: 0;
    right: 0;
    top: 23px;
    height: 1px;
    background: #3a3d41;
}
.labels {
    display: flex;
    height: 18px;
    color: #a9a7a5;
    font-size: 10.7px;
    line-height: 18px;
}
.labels span {
    width: 72px;
    flex: none;
    white-space: nowrap;
}
.zone {
    position: absolute;
    left: 1px;
    top: 23px;
    width: 35px;
    height: 7px;
    background: #39708f;
    border-right: 2px solid #a8c8dc;
    z-index: 2;
}
.zone i {
    position: absolute;
    left: 14px;
    top: 1px;
    width: 6px;
    height: 6px;
    background: #10242f;
    border: 1px solid #a8c8dc;
}
.tracks {
    flex: 1;
    position: relative;
    display: flex;
    flex-direction: column;
    padding-left: 1px;
}
.track {
    display: flex;
}
.track.v2 {
    height: 65px;
}
.track.v1 {
    height: 47px;
}
.track-head {
    width: 168px;
    flex: none;
    display: flex;
    align-items: flex-start;
    padding: 1px 0 0 19px;
    background: #1c1e21;
}
.v1 .track-head {
    background: #243c4b;
}
.track-body {
    width: 781px;
    height: 100%;
    background: #1c1e21;
}
.v1 .track-body {
    height: 39px;
    background: #243c4b;
}
.track-head .tr-chev {
    width: 26px;
    height: 26px;
    color: #cfcfcf;
}
.tr-name {
    width: 17px;
    height: 26px;
    margin-left: 1px;
    background: #4ed485;
    color: #17301f;
    text-align: center;
    line-height: 26px;
}
.track-head .tr-wand {
    margin: 5px 0 0 22px;
    width: 18px;
    height: 18px;
}
.track-head .tr-film {
    margin: 4px 0 0 10px;
    width: 18px;
    height: 18px;
    color: #d8d8d8;
}
.track-head .tr-lock {
    margin: 4px 0 0 11px;
    width: 16px;
    height: 18px;
    color: #c8c8c8;
}
.track-col {
    display: flex;
    flex-direction: column;
}
.hscroll {
    height: 8px;
    background: #1f2326;
}
.hscroll i {
    display: block;
    width: 174px;
    height: 8px;
    border-radius: 4px;
    background: #666;
}
.vscroll {
    position: absolute;
    left: 958px;
    top: 3px;
    width: 8px;
    height: 39px;
    border-radius: 4px;
    background: #555;
}
.playhead {
    position: absolute;
    left: 169px;
    top: -16px;
    bottom: 9px;
    width: 1px;
    background: #fff;
}
.playhead::before {
    content: "";
    position: absolute;
    left: 0;
    top: 0;
    border-top: 8px solid #fff;
    border-right: 8px solid transparent;
}

/* mixer */
.mixer {
    width: 305px;
    flex: none;
    background: #1f2326;
    display: flex;
    flex-direction: column;
    padding: 3px 0 2px;
}
.channels {
    flex: 1;
    display: flex;
}
.channel {
    width: 81px;
    flex: none;
    padding-left: 3px;
    display: flex;
    flex-direction: column;
    border-right: 1px solid #33363a;
}
.channel > div {
    width: 72px;
}
.channel.dark {
    width: 85px;
    background: #131517;
    padding-left: 7px;
    border-right: 0;
}
.channel.master {
    margin-left: 53px;
    width: 86px;
    padding-left: 6px;
    border-right: 0;
    border-left: 1px solid #33363a;
}
.ch-name {
    height: 24px;
    background: #131517;
    border: 1px solid #4a4d51;
    border-bottom: 3px solid #f4f4f4;
    text-align: center;
    line-height: 20px;
    flex: none;
}
.ch-icons {
    height: 40px;
    display: flex;
    align-items: center;
    justify-content: space-around;
}
.ch-icons .ico {
    width: 15px;
    height: 15px;
}
.balance {
    height: 6px;
    border-radius: 3px;
    background: #3a3d41;
    position: relative;
    margin: 4px 0 10px;
    flex: none;
}
.balance i {
    position: absolute;
    left: 33px;
    top: -3px;
    width: 6px;
    height: 13px;
    background: #d0d0d0;
    border: 1px solid #8a8a8a;
}
.pan {
    display: flex;
    align-items: center;
}
.pan span {
    width: 19px;
    padding: 0 3px;
}
.pan span:last-child {
    text-align: right;
}
.pan b, .gain b {
    font-weight: 400;
    border: 1px solid #4a4d51;
    border-radius: 5px;
    background: #131517;
    text-align: center;
}
.pan b {
    width: 34px;
    height: 29px;
    line-height: 27px;
}
.levels {
    height: 47px;
    display: flex;
    margin-top: 7px;
    flex: none;
}
.db-labels {
    width: 18px;
    font-size: 7px;
    line-height: 10px;
    text-align: right;
    display: flex;
    flex-direction: column;
    gap: 8px;
    padding-top: 5px;
    color: #c8c8c8;
    white-space: nowrap;
}
.bars {
    display: flex;
    gap: 1px;
    width: 16px;
    height: 32px;
    margin-top: 9px;
}
.bars i {
    flex: 1;
    background: #2a3039;
}
.db24 {
    width: 13px;
    font-size: 7px;
    line-height: 10px;
    color: #c8c8c8;
    margin: 20px 0 0 4px;
}
.fader {
    position: relative;
    width: 14px;
    margin-left: 1px;
    height: 40px;
}
.fader::before {
    content: "";
    position: absolute;
    left: 3px;
    right: 3px;
    top: 0;
    bottom: 0;
    border-radius: 4px;
    background: #3a3d41;
}
.fader i {
    position: absolute;
    left: 0;
    right: 0;
    top: 5px;
    height: 30px;
    background: linear-gradient(#b9b9b9 0 48%, #555 48% 52%, #e2e2e2 52%);
    border-radius: 1px;
}
.gain {
    display: flex;
    align-items: center;
    gap: 4px;
    padding-left: 3px;
    font-size: 12px;
}
.gain b {
    width: 49px;
    height: 29px;
    line-height: 27px;
    color: #8fcbf0;
}

/* status bar */
.statusbar {
    height: 30px;
    background: #1f2326;
    border-top: 2px solid #3a3d41;
    display: flex;
    align-items: center;
    gap: 2px;
    padding-left: 819px;
}
.st-select {
    width: 31px;
}
.statusbar .vsep {
    height: 26px;
    margin: 0 0 0 15px;
}
.st-loop {
    margin: 0 5px 0 7px;
}
.st-btn {
    width: 26px;
    height: 24px;
    background: #35383d;
    border: 1px solid #4a4d51;
    border-radius: 4px;
    display: flex;
    align-items: center;
    justify-content: center;
}
.st-btn .ico {
    width: 15px;
    height: 15px;
}
.st-btn.st-combo {
    width: 46px;
    justify-content: flex-start;
    padding-left: 5px;
}
.st-combo i {
    width: 1px;
    height: 22px;
    background: #4a4d51;
    margin: 0 3px 0 8px;
}
.st-combo .ico.small {
    width: 12px;
    height: 12px;
    color: #999;
}
.statusbar .st-sep2 {
    margin-left: 3px;
}
.st-zf {
    margin-left: 7px;
}
.st-zo {
    margin-left: 10px;
}
.zoom-slider {
    width: 100px;
    height: 6px;
    margin-left: 4px;
    border-radius: 3px;
    background: linear-gradient(to right, #45484c 0 67%, #2f80b5 67%);
    position: relative;
}
.zoom-slider i {
    position: absolute;
    left: 49px;
    top: -6px;
    width: 18px;
    height: 18px;
    border-radius: 50%;
    background: #2a2d32;
    border: 1px solid #55585c;
}
.st-zi {
    margin-left: 4px;
}
.bottom-edge {
    height: 2px;
    background: #e6e6e6;
}
```
